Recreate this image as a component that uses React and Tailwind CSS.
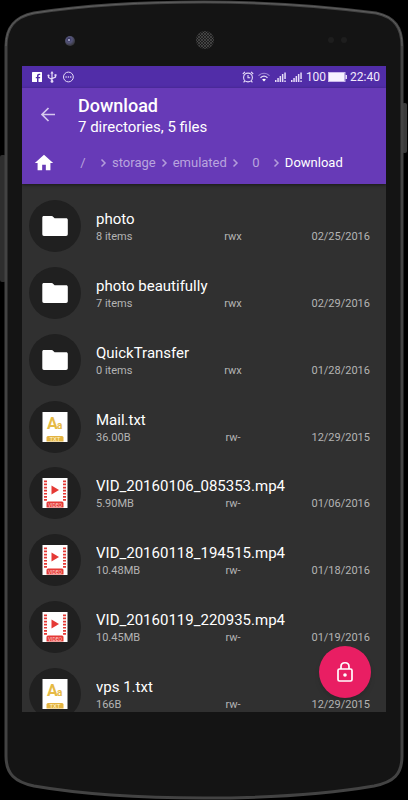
import React from 'react';

const entries = [
  { name: 'photo', type: 'folder', size: '8 items', perms: 'rwx', date: '02/25/2016' },
  { name: 'photo beautifully', type: 'folder', size: '7 items', perms: 'rwx', date: '02/29/2016' },
  { name: 'QuickTransfer', type: 'folder', size: '0 items', perms: 'rwx', date: '01/28/2016' },
  { name: 'Mail.txt', type: 'text', size: '36.00B', perms: 'rw-', date: '12/29/2015' },
  { name: 'VID_20160106_085353.mp4', type: 'video', size: '5.90MB', perms: 'rw-', date: '01/06/2016' },
  { name: 'VID_20160118_194515.mp4', type: 'video', size: '10.48MB', perms: 'rw-', date: '01/18/2016' },
  { name: 'VID_20160119_220935.mp4', type: 'video', size: '10.45MB', perms: 'rw-', date: '01/19/2016' },
  { name: 'vps 1.txt', type: 'text', size: '166B', perms: 'rw-', date: '12/29/2015' },
];

const crumbs = ['/', 'storage', 'emulated', '0', 'Download'];

// Phone body behind the screen
const PhoneFrame = () => (
  <svg
    className="absolute inset-0 h-full w-full"
    viewBox="0 0 408 800"
    preserveAspectRatio="none"
    aria-hidden="true"
  >
    <defs>
      <radialGradient id="lens" cx="0.4" cy="0.35" r="0.6">
        <stop offset="0" stopColor="#2b2a55" />
        <stop offset="0.5" stopColor="#55557a" />
        <stop offset="1" stopColor="#3a3a42" />
      </radialGradient>
      <pattern id="mesh" width="3" height="3" patternUnits="userSpaceOnUse">
        <rect width="3" height="3" fill="#1c1c1c" />
        <circle cx="1" cy="1" r="0.8" fill="#6a6a6a" />
        <circle cx="2.5" cy="2.5" r="0.6" fill="#555555" />
      </pattern>
    </defs>
    <rect x="0" y="155" width="6" height="127" rx="2" fill="#2e2e2e" />
    <rect x="402" y="103" width="5" height="50" rx="2" fill="#3a3a3a" />
    <path
      d="M6 46 C6 28 14 17 34 13 C85 5 145 2 204 2 C263 2 323 6 376 13 C395 17 402 28 402 46 V756 C402 774 394 782 374 786 C322 795 263 798 204 798 C145 798 86 795 34 786 C15 782 6 774 6 756 Z"
      fill="#141414"
      stroke="#434343"
      strokeWidth="3"
    />
    <path
      d="M6 46 C6 28 14 17 34 13 C85 5 145 2 204 2 C263 2 323 6 376 13 C395 17 402 28 402 46"
      fill="none"
      stroke="#5e5e5e"
      strokeWidth="1"
    />
    <circle cx="70" cy="41" r="5" fill="url(#lens)" />
    <circle cx="69" cy="40" r="1" fill="#b9b9d6" />
    <circle cx="205" cy="40" r="9" fill="url(#mesh)" />
    <circle cx="331" cy="40" r="3" fill="#1e1e1e" />
    <circle cx="344" cy="40" r="3" fill="#1e1e1e" />
  </svg>
);

const SignalIcon = () => (
  <svg className="h-3 w-3" viewBox="0 0 12 12" fill="#e6dcf8" aria-hidden="true">
    <rect x="1" y="9" width="1.5" height="2" />
    <rect x="3.3" y="7" width="1.5" height="4" />
    <rect x="5.6" y="5" width="1.5" height="6" />
    <rect x="7.9" y="3" width="1.5" height="8" />
    <rect x="10.3" y="1.5" width="1.5" height="6.5" />
    <rect x="10.3" y="9.5" width="1.5" height="1.5" />
  </svg>
);

const StatusBar = () => (
  <div className="flex h-[22px] items-center justify-between bg-[#512da8] pl-[10px] pr-[6px] text-[#f1eafc]">
    <div className="flex items-center gap-1">
      <svg className="h-[10px] w-[10px]" viewBox="0 0 10 10" aria-hidden="true">
        <rect width="10" height="10" rx="0.6" fill="#ffffff" />
        <path d="M5 10V6.3H3.8V4.9H5V3.8C5 2.5 5.8 1.7 7 1.7H8.2V3.1H7.3C6.7 3.1 6.5 3.4 6.5 3.9V4.9H8.2L8 6.3H6.5V10Z" fill="#512da8" />
      </svg>
      <svg className="h-3 w-3" viewBox="0 0 12 12" fill="none" stroke="#e6dcf8" strokeWidth="1.2" aria-hidden="true">
        <path d="M6 2V10M2.5 5V6.5L6 8.6M9.5 4.5V6L6 7.6" />
        <path d="M6 0L7.6 2.5H4.4Z" fill="#e6dcf8" stroke="none" />
        <circle cx="6" cy="10.4" r="1.4" fill="#e6dcf8" stroke="none" />
        <circle cx="2.5" cy="4.6" r="1.1" fill="#e6dcf8" stroke="none" />
        <rect x="8.5" y="3.2" width="2" height="2" fill="#e6dcf8" stroke="none" />
      </svg>
      <svg className="h-3 w-3" viewBox="0 0 12 12" aria-hidden="true">
        <circle cx="6.4" cy="6" r="4.9" fill="none" stroke="#e6dcf8" strokeWidth="1" />
        <g fill="#e6dcf8">
          <circle cx="4.1" cy="6" r="0.8" />
          <circle cx="6.4" cy="6" r="0.8" />
          <circle cx="8.7" cy="6" r="0.8" />
        </g>
      </svg>
    </div>
    <div className="flex items-center gap-1">
      <svg className="h-3 w-3" viewBox="0 0 12 12" fill="none" stroke="#e6dcf8" strokeWidth="1.1" aria-hidden="true">
        <circle cx="6" cy="6.5" r="4.4" />
        <path d="M6 4V6.8H8.2M0.8 3L3 0.9M11.2 3L9 0.9M2.8 9.8L1.6 11.3M9.2 9.8L10.4 11.3" />
      </svg>
      <svg className="h-3 w-3" viewBox="0 0 12 12" fill="none" aria-hidden="true">
        <path d="M0.5 4.6C3.6 1.4 8.4 1.4 11.5 4.6" stroke="#a58bd8" strokeWidth="1.1" />
        <path d="M2.5 6.7C4.6 4.7 7.4 4.7 9.5 6.7" stroke="#e6dcf8" strokeWidth="1.2" />
        <path d="M4.1 8.4C5.2 7.4 6.8 7.4 7.9 8.4L6 10.5Z" fill="#ffffff" />
      </svg>
      <SignalIcon />
      <SignalIcon />
      <div className="flex items-center gap-[2px] text-xs">
        <span>100</span>
        <svg className="h-3 w-[19px]" viewBox="0 0 19 12" fill="none" aria-hidden="true">
          <rect x="0.5" y="1.5" width="16.5" height="9" stroke="#c9b8ea" />
          <rect x="1" y="2" width="15.5" height="8" fill="#f6f1ff" />
          <rect x="17.5" y="4" width="1.5" height="4" fill="#e6dcf8" />
        </svg>
        <span className="pl-[1px]">22:40</span>
      </div>
    </div>
  </div>
);

const Breadcrumbs = () => (
  <nav aria-label="Path" className="flex items-center pb-3 pl-3 text-[13px] leading-4">
    <button type="button" aria-label="Home" className="mr-[17px] flex h-[18px] w-5 items-center justify-center">
      <svg className="h-[22px] w-[22px] shrink-0" viewBox="0 0 24 24" fill="#ffffff" aria-hidden="true">
        <path d="M10 20v-6h4v6h5v-8h3L12 3 2 12h3v8z" />
      </svg>
    </button>
    {crumbs.map((crumb, index) => (
      <React.Fragment key={crumb}>
        {index > 0 && (
          <svg className="h-4 w-[17px] shrink-0" viewBox="0 0 16 16" fill="none" stroke="#b39ddb" strokeWidth="1.5" aria-hidden="true">
            <path d="M6 4.5L9.5 8L6 11.5" />
          </svg>
        )}
        <button
          type="button"
          className={`min-w-6 text-center ${index === crumbs.length - 1 ? 'text-white' : 'text-[#b9a5de]'}`}
        >
          {crumb}
        </button>
      </React.Fragment>
    ))}
  </nav>
);

const FolderIcon = () => (
  <svg className="h-[22px] w-[26px]" viewBox="0 0 26 22" fill="#ffffff" aria-hidden="true">
    <path d="M2 1H9.5C10.3 1 10.8 1.3 11.3 1.9L12.6 3.2H24C25.2 3.2 25.8 3.8 25.8 5V19C25.8 20.3 25.2 21 24 21H2C0.8 21 0.3 20.3 0.3 19V2.8C0.3 1.6 0.8 1 2 1Z" />
  </svg>
);

const TextIcon = () => (
  <svg className="h-[30px] w-[26px]" viewBox="0 0 26 30" aria-hidden="true">
    <rect x="0.5" width="25" height="30" fill="#ffffff" />
    <text x="5" y="17" fontSize="16" fontWeight="700" fill="#e6ba45">A</text>
    <text x="15" y="17" fontSize="10" fontWeight="700" fill="#e6ba45">a</text>
    <path d="M4.5 29.5V25.5Q4.5 24 6 24H20Q21.5 24 21.5 25.5V29.5Z" fill="#e3b341" />
    <text x="13" y="29" fontSize="6" textAnchor="middle" fill="#fff3cf">TXT</text>
  </svg>
);

const VideoIcon = () => (
  <svg className="h-[30px] w-[26px]" viewBox="0 0 26 30" aria-hidden="true">
    <rect x="0.5" width="25" height="30" fill="#ffffff" />
    <path d="M3.5 2.5V23M22.5 2.5V23" stroke="#e53935" strokeWidth="3" strokeDasharray="1.7 1.4" />
    <path d="M9.5 7.5L17 12L9.5 16.5Z" fill="#e53935" />
    <path d="M4.5 29.5V25Q4.5 23.5 6 23.5H20Q21.5 23.5 21.5 25V29.5Z" fill="#e53935" />
    <text x="13" y="28.5" fontSize="5" textAnchor="middle" fill="#ffd3d0">VIDEO</text>
  </svg>
);

const icons = { folder: FolderIcon, text: TextIcon, video: VideoIcon };

const FileRow = ({ entry }) => {
  const Icon = icons[entry.type];

  return (
    <li className="flex items-center gap-[15px] pl-[7px] pr-4">
      <div className="flex h-[52px] w-[52px] shrink-0 items-center justify-center rounded-full bg-[#202020]">
        <Icon />
      </div>
      <div className="min-w-0 flex-1 pt-[2px]">
        <p className="truncate text-[15px] leading-5 text-white">{entry.name}</p>
        <div className="grid grid-cols-3 text-[11px] leading-4 text-[#b4b4b4]">
          <span>{entry.size}</span>
          <span className="text-center">{entry.perms}</span>
          <span className="text-right">{entry.date}</span>
        </div>
      </div>
    </li>
  );
};

const App = () => {
  return (
    <div className="relative h-screen bg-black px-[22px] pb-[88px] pt-[66px] font-['Roboto',sans-serif]">
      <PhoneFrame />

      <div className="relative flex h-full flex-col overflow-hidden bg-[#303030]">
        <StatusBar />

        <header className="z-10 bg-[#673ab7] shadow-[0_1px_3px_rgba(0,0,0,0.5)]">
          <div className="flex items-center gap-5 pb-[17px] pl-4 pt-[7px]">
            <button type="button" aria-label="Back" className="flex h-5 w-5 items-center justify-center">
              <svg className="h-5 w-5" viewBox="0 0 20 20" fill="none" stroke="#d6c8ee" strokeWidth="1.7" aria-hidden="true">
                <path d="M17 8.5H4M10.5 2L4 8.5L10.5 15" />
              </svg>
            </button>
            <div className="text-white">
              <h1 className="text-lg font-medium leading-[22px]">Download</h1>
              <p className="text-[15px] leading-5">7 directories, 5 files</p>
            </div>
          </div>
          <Breadcrumbs />
        </header>

        <main className="min-h-0 flex-1 overflow-hidden">
          <ul className="grid h-[543px] auto-rows-fr pt-[9px]">
            {entries.map((entry) => (
              <FileRow key={entry.name} entry={entry} />
            ))}
          </ul>
        </main>

        <button
          type="button"
          aria-label="Lock"
          className="absolute bottom-[14px] right-[15px] flex h-[52px] w-[52px] items-center justify-center rounded-full bg-[#e91e63] shadow-md"
        >
          <svg className="h-6 w-6" viewBox="0 0 24 24" fill="none" stroke="#ffffff" strokeWidth="1.7" aria-hidden="true">
            <rect x="5" y="9" width="14" height="12" rx="1.5" />
            <path d="M8 9V6.5C8 1.5 16 1.5 16 6.5V9" />
            <circle cx="12" cy="15" r="1.8" fill="#ffffff" stroke="none" />
          </svg>
        </button>
      </div>
    </div>
  );
};

export default App;
